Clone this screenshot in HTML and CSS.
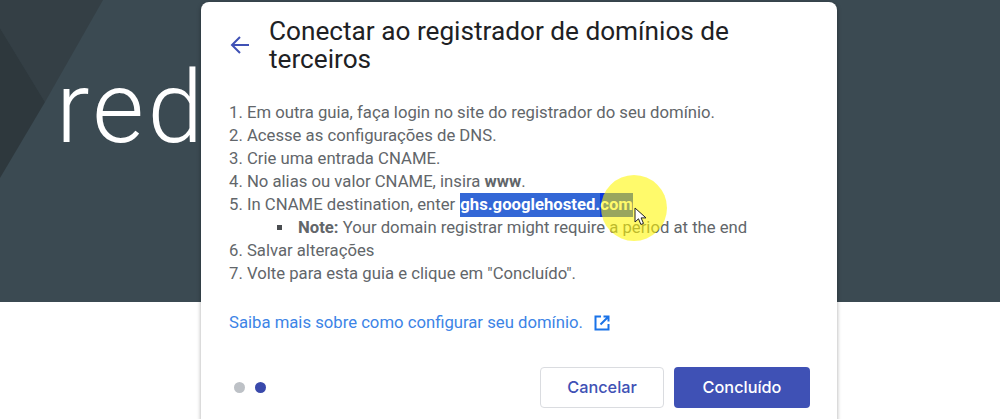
FILE: index.html
```html
<!DOCTYPE html>
<html lang="pt">
<head>
<meta charset="utf-8">
<title>Conectar ao registrador</title>
<link rel="stylesheet" href="styles.css">
</head>
<body>
<div class="page">
  <header class="hero">
    <svg class="shards" viewBox="0 0 1000 302" preserveAspectRatio="none" aria-hidden="true">
      <polygon points="0,0 103,0 45,102 0,28" fill="#343f45"/>
      <polygon points="0,28 45,102 0,178" fill="#2e383d"/>
    </svg>
    <div class="brand">red</div>
  </header>
  <section class="dialog">
    <div class="head">
      <svg class="back" viewBox="0 0 20 20" aria-hidden="true"><path d="M19 10H2M10 2l-8 8 8 8" fill="none" stroke="#3f51b5" stroke-width="2"/></svg>
      <h1>Conectar ao registrador de domínios de terceiros</h1>
    </div>
    <ol class="steps">
      <li>1. Em outra guia, faça login no site do registrador do seu domínio.</li>
      <li>2. Acesse as configurações de DNS.</li>
      <li>3. Crie uma entrada CNAME.</li>
      <li>4. No alias ou valor CNAME, insira <b>www</b>.</li>
      <li>5. In CNAME destination, enter <b class="sel">ghs.googlehosted.<span class="sel-hi">com</span></b></li>
      <li class="note"><span class="sq"></span><span><b>Note:</b> Your domain registrar might require a period at the end</span></li>
      <li>6. Salvar alterações</li>
      <li>7. Volte para esta guia e clique em "Concluído".</li>
    </ol>
    <a class="more" href="#">Saiba mais sobre como configurar seu domínio.
      <svg class="ext" viewBox="0 0 18 18" aria-hidden="true"><path d="M8 2.500H2.500v13h13V10M10.500 2.500h5v5M15.500 2.500L7.500 10.500" fill="none" stroke="#1a73e8" stroke-width="2"/></svg>
    </a>
    <div class="foot">
      <div class="dots"><i class="dot"></i><i class="dot on"></i></div>
      <div class="actions">
        <button class="btn ghost">Cancelar</button>
        <button class="btn solid">Concluído</button>
      </div>
    </div>
  </section>
  <div class="spot"></div>
  <svg class="cursor" viewBox="0 0 13 19" aria-hidden="true"><path d="M1 1v14l3.500-3.200 2.400 5.700 2.600-1.100-2.400-5.500H12z" fill="#fff" stroke="#222" stroke-width="1"/></svg>
</div>
</body>
</html>
```
FILE: styles.css
```css
* { box-sizing: border-box; }
html, body { margin: 0; padding: 0; background: #fff; }
.page { position: relative; width: 1000px; height: 419px; overflow: hidden; font-family: Roboto, "Liberation Sans", sans-serif; }
.hero { position: relative; height: 302px; background: #3b4a52; overflow: hidden; }
.shards { position: absolute; inset: 0; width: 100%; height: 100%; }
.brand { position: relative; margin: 47px 0 0 56px; font-size: 100px; line-height: 122px; font-weight: 300; color: #fff; letter-spacing: 3.5px; }
.dialog { position: absolute; left: 201px; top: 2px; width: 636px; height: 440px; background: #fff; border-radius: 8px; box-shadow: 0 1px 4px rgba(0,0,0,.35); padding: 15px 27px 0 29px; }
.head { display: flex; align-items: center; gap: 19px; }
.back { width: 20px; height: 20px; flex: none; }
h1 { margin: 0; font-size: 26.2px; line-height: 28px; font-weight: 400; color: #202124; width: 520px; font-family: Roboto, sans-serif; }
.steps { list-style: none; margin: 28px 0 0 -1px; padding: 0; font-size: 16.7px; line-height: 23px; color: #62666a; }
.sel { background: #3367d6; color: #fff; padding: 2px 0 3px; margin-left: 1px; }
.sel-hi { background: #0a38e0; padding: 2px 0 3px; }
.note { display: flex; align-items: center; padding-left: 48px; }
.sq { width: 5px; height: 5px; background: #4a4d50; margin-right: 16px; }
.more { display: flex; align-items: center; gap: 10px; margin: 26px 0 0 -1px; font-size: 16.7px; line-height: 24px; color: #3c84e6; text-decoration: none; }
.ext { width: 18px; height: 18px; }
.foot { display: flex; justify-content: space-between; align-items: center; margin-top: 32px; }
.dots { display: flex; gap: 10px; margin-left: 4px; }
.dot { width: 11px; height: 11px; border-radius: 50%; background: #bdc1c6; }
.dot.on { background: #3949ab; }
.actions { display: flex; gap: 10px; }
.btn { width: 136px; height: 41px; border-radius: 4px; font: 500 16.3px/1 Inter, Roboto, sans-serif; cursor: pointer; }
.ghost { width: 124px; background: #fff; border: 1px solid #dadce0; color: #3f51b5; }
.solid { background: #3f51b5; border: 0; color: #fff; }
.spot { position: absolute; left: 601px; top: 175px; width: 66px; height: 66px; border-radius: 50%; background: rgba(255,246,0,.58); }
.cursor { position: absolute; left: 634px; top: 207px; width: 13px; height: 19px; }
```
